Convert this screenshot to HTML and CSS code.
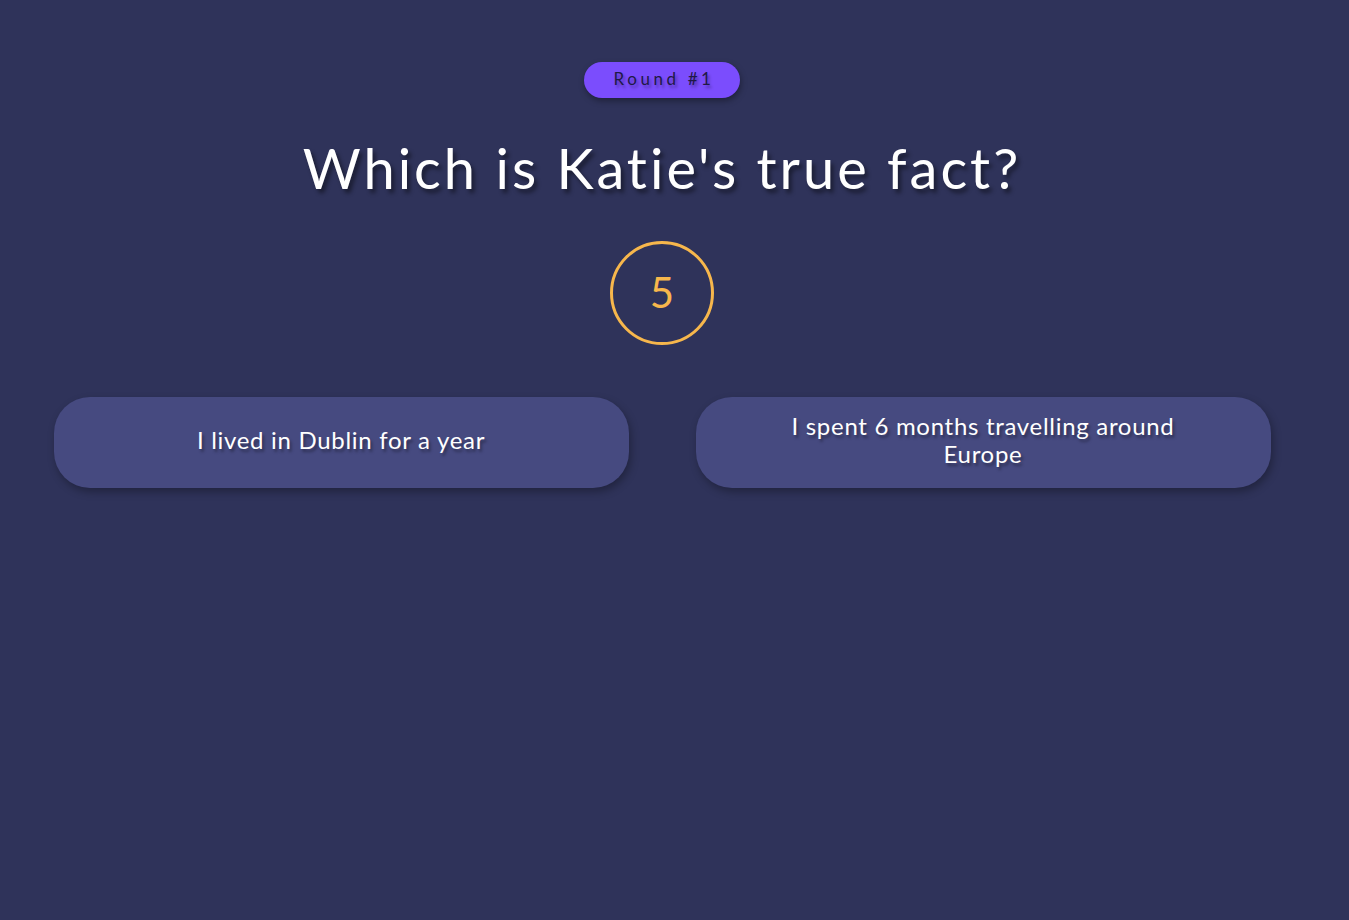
FILE: index.html
```html
<!DOCTYPE html>
<html>
<head>
<meta charset="utf-8">
<link rel="stylesheet" href="styles.css">
</head>
<body>
<main class="page">
  <div class="badge">Round #1</div>
  <h1 class="question">Which is Katie's true fact?</h1>
  <div class="timer">5</div>
  <div class="answers">
    <button class="answer">I lived in Dublin for a year</button>
    <button class="answer">I spent 6 months travelling around Europe</button>
  </div>
</main>
</body>
</html>
```

FILE: styles.css
```css
html, body {
  margin: 0;
  padding: 0;
  background: #2f335a;
  height: 100%;
}
body {
  font-family: "Lato", "Open Sans", sans-serif;
  color: #fff;
}
.page {
  width: 1324px;
  display: flex;
  flex-direction: column;
  align-items: center;
  padding-top: 62px;
}
.badge {
  width: 156px;
  height: 36px;
  box-sizing: border-box;
  border-radius: 18px;
  background: #7b4dfd;
  color: #1f1946;
  font-size: 17px;
  letter-spacing: 3.6px;
  display: flex;
  align-items: center;
  justify-content: center;
  padding: 0 0 4px 4px;
  box-shadow: 1px 3px 6px rgba(0, 0, 0, 0.35);
  text-shadow: 2px 3px 3px rgba(0, 0, 0, 0.3);
}
.question {
  margin: 37px 0 0;
  font-weight: 400;
  font-size: 56px;
  line-height: 66px;
  letter-spacing: 3px;
  text-shadow: 3px 4px 4px rgba(0, 0, 0, 0.45);
}
.timer {
  margin-top: 40px;
  width: 104px;
  height: 104px;
  box-sizing: border-box;
  border: 3px solid #f7b74c;
  border-radius: 50%;
  color: #f7b74c;
  font-size: 42px;
  display: flex;
  align-items: center;
  justify-content: center;
  padding-bottom: 3px;
}
.answers {
  margin-top: 52px;
  width: 1217px;
  display: grid;
  grid-template-columns: 1fr 1fr;
  column-gap: 67px;
}
.answer {
  height: 91px;
  border: none;
  border-radius: 36px;
  background: #464a80;
  color: #fff;
  font-family: inherit;
  font-size: 24px;
  letter-spacing: 0.7px;
  line-height: 28px;
  padding: 0 85px 6px;
  box-shadow: 2px 4px 8px rgba(0, 0, 0, 0.3);
  text-shadow: 2px 3px 3px rgba(0, 0, 0, 0.35);
}
```
